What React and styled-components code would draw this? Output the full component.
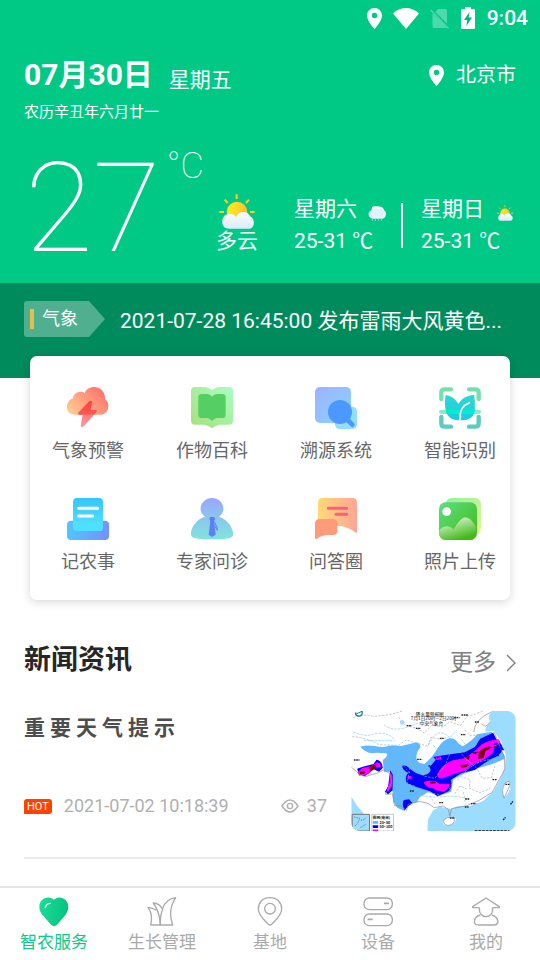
import React from 'react';
import styled, { createGlobalStyle } from 'styled-components';

const GlobalStyle = createGlobalStyle`
  * {
    box-sizing: border-box;
  }

  body {
    margin: 0;
    background: #ffffff;
    font-family: Roboto, "Noto Sans CJK SC", sans-serif;
    -webkit-font-smoothing: antialiased;
  }

  h1, h2, h3, p {
    margin: 0;
  }

  button {
    padding: 0;
    border: 0;
    background: none;
    color: inherit;
    font-family: inherit;
    cursor: pointer;
  }

  a {
    color: inherit;
    text-decoration: none;
  }

  svg {
    display: block;
    flex: none;
  }
`;

const Page = styled.div`
  display: flex;
  flex-direction: column;
  min-height: 100vh;
`;

const Hero = styled.header`
  padding-bottom: 11px;
  background: #00c986;
  color: #ffffff;
`;

const StatusBar = styled.div`
  display: flex;
  align-items: center;
  justify-content: flex-end;
  height: 36px;
  padding: 0 12px;
`;

const StatusIcons = styled.div`
  display: flex;
  align-items: center;
  gap: 11px;
  margin-right: 12px;
`;

const Clock = styled.span`
  font-size: 21px;
  line-height: 24px;
  font-weight: 500;
`;

const DateRow = styled.div`
  display: flex;
  align-items: center;
  padding: 17px 24px 0;
`;

const Today = styled.h1`
  font-size: 30px;
  line-height: 44px;
  font-weight: 700;
`;

const Weekday = styled.span`
  margin-left: 16px;
  padding-top: 10px;
  font-size: 21px;
  line-height: 34px;
`;

const City = styled.button`
  display: flex;
  align-items: center;
  gap: 12px;
  margin-left: auto;
  font-size: 20px;
  line-height: 30px;
`;

const Lunar = styled.p`
  padding: 5px 24px 0;
  font-size: 15px;
  line-height: 20px;
`;

const WeatherRow = styled.div`
  display: flex;
  align-items: flex-end;
  justify-content: space-between;
  padding: 24px 25px 0;
`;

const Temperature = styled.div`
  display: flex;
  font-weight: 100;
`;

const Degrees = styled.span`
  font-size: 124px;
  line-height: 126px;
`;

const Unit = styled.span`
  margin-left: 6px;
  font-size: 36px;
  line-height: 40px;
`;

const Forecast = styled.div`
  display: flex;
  align-items: flex-end;
  padding-bottom: 15px;
  font-size: 21px;
  line-height: 32px;
`;

const Now = styled.div`
  display: flex;
  flex-direction: column;
  align-items: center;
  margin-right: 36px;

  svg {
    margin-bottom: -4px;
  }
`;

const Day = styled.div`
  display: flex;
  flex-direction: column;
`;

const DayName = styled.div`
  display: flex;
  align-items: center;
  gap: 11px;

  svg {
    margin-top: 8px;
  }
`;

const Divider = styled.div`
  width: 2px;
  height: 45px;
  margin: 0 18px 9px 15px;
  background: #ffffff;
`;

const Notice = styled.section`
  display: flex;
  align-items: flex-start;
  gap: 15px;
  padding: 18px 24px 37px;
  background: #008b5c;
  color: #ffffff;
`;

const Tag = styled.span`
  display: flex;
  align-items: center;
  gap: 8px;
  flex: none;
  width: 81px;
  height: 36px;
  padding-left: 6px;
  border-radius: 3px 0 0 3px;
  background: #4faf8e;
  clip-path: polygon(0 0, 65px 0, 100% 50%, 65px 100%, 0 100%);
  font-size: 18px;
  line-height: 34px;

  &::before {
    content: "";
    width: 4px;
    height: 20px;
    background: #e6bd4f;
  }
`;

const NoticeText = styled.p`
  min-width: 0;
  overflow: hidden;
  font-size: 21px;
  line-height: 40px;
  text-overflow: ellipsis;
  white-space: nowrap;
`;

const Card = styled.section`
  display: grid;
  grid-template-columns: repeat(4, 72px);
  justify-content: space-between;
  row-gap: 34px;
  margin: -22px 30px 0;
  padding: 31px 14px 25px 22px;
  border-radius: 7px;
  background: #ffffff;
  box-shadow: 0 2px 10px rgba(0, 0, 0, 0.16);
`;

const Service = styled.button`
  display: flex;
  flex-direction: column;
  align-items: center;
  gap: 9px;
  color: #666666;
  font-size: 18px;
  line-height: 26px;
  white-space: nowrap;
`;

const News = styled.main`
  padding: 42px 24px 24px;
`;

const NewsHeader = styled.div`
  display: flex;
  align-items: center;
  justify-content: space-between;
  margin-bottom: 33px;
`;

const NewsHeading = styled.h2`
  color: #262626;
  font-size: 27px;
  line-height: 36px;
  font-weight: 700;
`;

const More = styled.a`
  display: flex;
  align-items: center;
  gap: 10px;
  padding-top: 6px;
  color: #808080;
  font-size: 23px;
  line-height: 30px;
`;

const Article = styled.article`
  display: flex;
  gap: 24px;
  padding-bottom: 26px;
  border-bottom: 2px solid #ebebeb;
`;

const ArticleBody = styled.div`
  display: flex;
  flex: 1;
  flex-direction: column;
  justify-content: space-between;
  padding: 2px 0 13px;
`;

const ArticleTitle = styled.h3`
  color: #4d4d4d;
  font-size: 21px;
  line-height: 30px;
  font-weight: 700;
  letter-spacing: 5px;
`;

const Meta = styled.div`
  display: flex;
  align-items: center;
  color: #b0b0b0;
  font-size: 18px;
  line-height: 24px;
`;

const Hot = styled.span`
  margin-right: 12px;
  padding: 0 3px;
  border-radius: 3px 3px 3px 0;
  background: #ff4200;
  color: #ffffff;
  font-size: 11px;
  line-height: 15px;
`;

const Views = styled.span`
  display: flex;
  align-items: center;
  gap: 8px;
  margin-left: auto;
`;

const Thumb = styled.div`
  flex: none;
  overflow: hidden;
  border-radius: 9px;
`;

const TabBar = styled.nav`
  display: flex;
  margin-top: auto;
  border-top: 2px solid #e6e6e6;
  background: #ffffff;
`;

const Tab = styled.a`
  display: flex;
  flex: 1;
  flex-direction: column;
  align-items: center;
  gap: 3px;
  padding: 9px 0 6px;
  color: ${({ $active }) => ($active ? '#10c987' : '#aaaaaa')};
  font-size: 17px;
  line-height: 24px;
`;

const Pin = () => (
  <svg width="15" height="21" viewBox="0 0 15 21">
    <path
      fill="#fff"
      fillRule="evenodd"
      d="M7.5 0C3.3 0 0 3.3 0 7.4C0 13 7.5 21 7.5 21S15 13 15 7.4C15 3.3 11.7 0 7.5 0ZM7.5 4.8A2.7 2.7 0 1 1 7.5 10.2A2.7 2.7 0 0 1 7.5 4.8Z"
    />
  </svg>
);

const Wifi = () => (
  <svg width="26" height="21" viewBox="0 0 26 21">
    <path fill="#fff" d="M0 5.6C7.5-1.8 18.500-1.800 26 5.600L13 21Z" />
  </svg>
);

const NoSim = () => (
  <svg width="20" height="21" viewBox="0 0 20 21">
    <path fill="#4dd9ab" d="M8 1H15.500Q17 1 17 2.500V15.500L5.200 3.900ZM2.500 5.500L17 19Q16.600 20 15.500 20H4Q2.500 20 2.500 18.500Z" />
    <path stroke="#4dd9ab" strokeWidth="1.500" d="M.6 2L18.500 20.500" />
  </svg>
);

const Battery = () => (
  <svg width="14" height="22" viewBox="0 0 14 22">
    <path fill="#fff" d="M0 3Q0 2 1 2H4V0H10V2H13Q14 2 14 3V21Q14 22 13 22H1Q0 22 0 21Z" />
    <path fill="#00b67a" d="M8.500 5L3 13H6.200L5.400 19L11 10.500H7.700Z" />
  </svg>
);

const SunCloud = ({ width, height, id }) => (
  <svg width={width} height={height} viewBox="658 463 108 105">
    <defs>
      <linearGradient id={`${id}-sun`}>
        <stop offset="0" stopColor="#fff01f" />
        <stop offset="1" stopColor="#ffbd2f" />
      </linearGradient>
      <linearGradient id={`${id}-cloud`} x1="0" y1="0" x2="0" y2="1">
        <stop offset="0" stopColor="#fcfcff" />
        <stop offset="1" stopColor="#dceafb" />
      </linearGradient>
    </defs>
    <path
      stroke="#ffcb2d"
      strokeWidth="6"
      fill="none"
      d="M711 464V478M675 480L684 490M748 480L739 490M659 517H673M751 517H765"
    />
    <circle cx="712" cy="517" r="31" fill={`url(#${id}-sun)`} />
    <path
      fill={`url(#${id}-cloud)`}
      d="M688 567C661 567 664 531 679 525C690 519 703 523 709 532C716 513 744 512 751 530C767 535 767 567 747 567Z"
    />
  </svg>
);

const SnowCloud = () => (
  <svg width="18" height="15" viewBox="505 80 54 45">
    <path fill="#fff" d="M517 84Q520 80 530 81L545 82Q551 84 553 92L515 96Z" />
    <path
      fill="#e6effd"
      d="M519 118C504 116 503 97 515 93C519 84 532 86 535 90C543 85 552 88 553 93C562 97 561 115 549 118Z"
    />
    <path stroke="#d9eefa" strokeWidth="3" strokeDasharray="3 6" d="M517 122H551" />
  </svg>
);

const AlertIcon = () => (
  <svg width="42" height="42" viewBox="111 51 126 126">
    <defs>
      <linearGradient id="alert-cloud" x1="0" y1="0.800" x2="1" y2="0.200">
        <stop offset="0" stopColor="#ffca92" />
        <stop offset="1" stopColor="#ff6e6b" />
      </linearGradient>
      <linearGradient id="alert-bolt" x1="0" y1="0" x2="0" y2="1">
        <stop offset="0" stopColor="#ff3d38" />
        <stop offset="0.500" stopColor="#ff5852" />
        <stop offset="0.550" stopColor="#ff7b7e" />
        <stop offset="1" stopColor="#ff9ea1" />
      </linearGradient>
    </defs>
    <path
      fill="url(#alert-cloud)"
      d="M135 134C104 134 103 93 129 85C129 67 154 60 164 70C173 41 227 45 225 88C243 99 236 134 212 134Z"
    />
    <path
      fill="url(#alert-bolt)"
      d="M179 93Q185 90 186 96L182 120H197Q203 121 199 127L161 169Q154 175 152 167L158 135H148Q142 133 146 127Z"
    />
  </svg>
);

const BookIcon = () => (
  <svg width="42" height="42" viewBox="483 51 126 126">
    <defs>
      <linearGradient id="book" x1="0" y1="1" x2="1" y2="0">
        <stop offset="0" stopColor="#a8e07a" />
        <stop offset="1" stopColor="#aafcc4" />
      </linearGradient>
    </defs>
    <path
      fill="url(#book)"
      d="M496 51H526Q536 52 546 60Q556 52 566 51H597Q609 51 609 63V152Q609 164 597 164H573Q561 164 546 175Q531 164 520 164H496Q483 164 483 152V63Q483 51 496 51Z"
    />
    <path
      fill="#55cf63"
      d="M515 72H532Q541 72 546 80Q551 72 561 72H577Q587 72 587 82V134Q587 144 577 144H560Q554 145 546 153Q538 145 532 144H515Q505 144 505 134V82Q505 72 515 72Z"
    />
  </svg>
);

const TraceIcon = () => (
  <svg width="42" height="42" viewBox="105 51 126 126">
    <defs>
      <linearGradient id="trace" x1="0" y1="0" x2="1" y2="1">
        <stop offset="0" stopColor="#9eb2ff" />
        <stop offset="1" stopColor="#8ad4ff" />
      </linearGradient>
    </defs>
    <rect x="165" y="110" width="66" height="67" rx="14" fill="#91dfff" />
    <rect x="105" y="51" width="108" height="108" rx="15" fill="url(#trace)" />
    <circle cx="180" cy="126" r="36" fill="#4b98ff" />
    <path stroke="#4b98ff" strokeWidth="14" strokeLinecap="round" d="M203 150L217 164" />
  </svg>
);

const ScanIcon = () => (
  <svg width="42" height="42" viewBox="477 51 126 126">
    <defs>
      <linearGradient id="scan-leaf" x1="0" y1="0" x2="0" y2="1">
        <stop offset="0" stopColor="#30d8cf" />
        <stop offset="1" stopColor="#17cbe4" />
      </linearGradient>
    </defs>
    <path
      fill="none"
      stroke="#74e0ae"
      strokeWidth="13"
      strokeLinecap="round"
      d="M484 87V68Q484 58 494 58H513M567 58H586Q596 58 596 68V87"
    />
    <path
      fill="none"
      stroke="#5dcbbd"
      strokeWidth="13"
      strokeLinecap="round"
      d="M484 141V160Q484 170 494 170H513M567 170H586Q596 170 596 160V141"
    />
    <rect x="477" y="119" width="126" height="13" rx="6" fill="#88e9d4" />
    <path
      fill="url(#scan-leaf)"
      d="M497 75Q522 79 535 101Q549 77 582 74Q587 105 583 126Q578 152 542 151Q505 153 498 124Q492 100 497 75Z"
    />
    <path fill="#00edce" d="M497 119H585Q584 127 581 132H501Q498 127 497 119Z" />
    <path fill="none" stroke="#fff" strokeWidth="5" strokeLinecap="round" d="M568 98Q537 111 541 143L535 161" />
  </svg>
);

const RecordIcon = () => (
  <svg width="42" height="42" viewBox="111 39 126 126">
    <defs>
      <linearGradient id="record-tray">
        <stop offset="0" stopColor="#53c5fd" />
        <stop offset="1" stopColor="#7590ff" />
      </linearGradient>
      <linearGradient id="record-paper" x1="0" y1="0" x2="0" y2="1">
        <stop offset="0" stopColor="#35c5ff" />
        <stop offset="1" stopColor="#57e4ff" />
      </linearGradient>
    </defs>
    <path
      fill="url(#record-tray)"
      d="M124 107H138Q153 120 174 120Q197 120 208 107H225Q237 107 237 119V152Q237 165 225 165H124Q111 165 111 152V119Q111 107 124 107Z"
    />
    <rect x="129" y="39" width="90" height="99" rx="12" fill="url(#record-paper)" />
    <path fill="#4fdfff" d="M129 106Q152 112 174 120Q197 112 219 106V126Q219 138 207 138H141Q129 138 129 126Z" />
    <path stroke="#fff" strokeWidth="9" strokeLinecap="round" d="M146 70H203M146 93H188" />
  </svg>
);

const ExpertIcon = () => (
  <svg width="42" height="42" viewBox="483 39 126 126">
    <defs>
      <linearGradient id="expert" gradientUnits="userSpaceOnUse" x1="0" y1="39" x2="0" y2="163">
        <stop offset="0" stopColor="#98a6ff" />
        <stop offset="1" stopColor="#80e5dc" />
      </linearGradient>
    </defs>
    <path
      fill="url(#expert)"
      d="M525 95C499 78 514 39 546 39C579 39 592 78 567 95C597 104 614 138 608 153C604 161 580 163 546 163C513 163 487 161 484 153C478 136 496 103 525 95Z"
    />
    <path fill="#5a7ffc" d="M540 96H553L555 103L552 108L557 149L546 156L536 149L541 108L538 103Z" />
    <path fill="none" stroke="#5a7ffc" strokeWidth="3" d="M553 110L562 130V136L553 121" />
  </svg>
);

const AnswerIcon = () => (
  <svg width="42" height="42" viewBox="105 39 126 126">
    <defs>
      <linearGradient id="answer">
        <stop offset="0" stopColor="#ffd977" />
        <stop offset="1" stopColor="#ffa595" />
      </linearGradient>
    </defs>
    <path
      fill="url(#answer)"
      d="M128 39H217Q231 39 231 53V140Q231 146 225 142Q203 125 181 123H114V53Q114 39 128 39Z"
    />
    <path stroke="#f9607b" strokeWidth="9" strokeLinecap="round" d="M145 70H200M168 88H200" />
    <path
      fill="#ff9a7a"
      d="M119 102H158Q172 102 172 116V137Q172 150 158 150H142Q127 150 111 161Q105 164 105 158V116Q105 102 119 102Z"
    />
  </svg>
);

const PhotoIcon = () => (
  <svg width="42" height="42" viewBox="477 39 126 126">
    <defs>
      <linearGradient id="photo-back" x1="0" y1="0" x2="1" y2="1">
        <stop offset="0" stopColor="#8ef4a5" />
        <stop offset="1" stopColor="#e8f28c" />
      </linearGradient>
      <linearGradient id="photo" x1="0" y1="0" x2="1" y2="1">
        <stop offset="0" stopColor="#5dde84" />
        <stop offset="1" stopColor="#3fba13" />
      </linearGradient>
      <linearGradient id="photo-hill" x1="0" y1="0" x2="0.500" y2="1">
        <stop offset="0" stopColor="#f7fff5" />
        <stop offset="1" stopColor="#42ba19" />
      </linearGradient>
    </defs>
    <rect x="497" y="39" width="106" height="108" rx="18" fill="url(#photo-back)" />
    <rect x="477" y="52" width="114" height="113" rx="20" fill="url(#photo)" />
    <circle cx="500" cy="80" r="13" fill="#fff" />
    <path
      fill="url(#photo-hill)"
      d="M478 136Q487 124 503 124Q514 125 521 133Q542 97 556 97Q573 98 588 126V145Q588 165 569 165H497Q478 165 478 145Z"
    />
  </svg>
);

const Eye = () => (
  <svg width="18" height="14" viewBox="0 0 18 14" fill="none" stroke="#b0b0b0" strokeWidth="1.400">
    <path d="M1 7Q9-5 17 7Q9 19 1 7Z" />
    <circle cx="9" cy="7" r="2.600" />
  </svg>
);

const Chevron = () => (
  <svg width="10" height="18" viewBox="0 0 10 18" fill="none" stroke="#808080" strokeWidth="1.400">
    <path d="M1 1L9 9L1 17" />
  </svg>
);

const RainMap = () => (
  <svg width="165" height="120" viewBox="35 243 492 360" role="img" aria-label="降水预报图">
    <rect x="35" y="243" width="492" height="360" fill="#fff" />
    <path
      fill="#9cdcff"
      d="M527 243H455Q440 262 453 276Q436 289 436 305L462 303L485 337L498 376L495 417L481 447L462 483L430 513L390 528L352 529L335 537L300 530L280 541L264 569L263 603H527ZM35 500L50 525L70 548L76 567L91 603H35Z"
    />
    <path fill="#fff" d="M488 474Q494 454 509 456Q515 466 507 486L495 503Q485 493 488 474ZM310 575Q318 559 337 560Q351 562 347 574Q335 588 318 586Q309 583 310 575Z" />
    <path
      fill="#62b8fd"
      d="M61 350Q80 344 105 348Q132 354 145 347Q165 345 184 348L218 340Q240 332 242 352Q228 366 230 387Q237 404 255 401L276 380L297 350Q309 331 328 325Q347 324 355 340L368 349Q396 334 412 313L455 305L495 379L492 388L458 402L417 414L371 432L340 447L334 485L299 497L265 486L240 500L232 516L205 523L194 543L172 533L160 514L158 482L145 485L157 461L152 426L132 425L129 390Q147 378 139 370Q107 366 94 370Q75 365 61 350Z"
    />
    <path
      fill="#00f"
      d="M187 407Q199 405 207 413Q225 431 249 436Q281 429 269 412L288 389L280 381Q300 376 321 374L375 367L405 351L421 326L460 308L469 326Q486 340 490 356Q479 380 455 386L431 401L405 420L365 429L333 450Q340 471 327 484L293 499L271 484L221 468L201 459Q193 440 205 428Q188 421 187 407ZM52 416L69 410L101 402L110 389Q128 393 129 413L118 425L99 417L75 439L57 433ZM151 421L159 434L158 481L145 493L135 486L145 468ZM192 510L208 508L218 520L205 529L194 541Q185 523 192 510Z"
    />
    <path
      fill="#f0f"
      d="M293 432Q304 404 339 391L377 384L407 361L426 343Q449 330 477 328L482 338L465 350L458 370L432 389L396 405L377 422L345 431L309 445Q290 447 293 432ZM251 456Q265 450 287 453L298 461L328 462Q329 479 309 485Q288 483 280 475Q257 473 251 456ZM54 426L67 414L98 407L111 397Q124 398 123 411L107 413L85 433L58 437ZM285 381L302 379L305 388L290 390ZM202 440L213 437L216 446L204 446ZM151 427L158 437L156 470L144 485L140 480L149 458Z"
    />
    <path fill="#7d0014" d="M417 365L430 355L451 348L450 358L437 363L432 384L415 387ZM380 377L390 378L387 390L379 386ZM397 369L411 366L409 373ZM60 425L76 423L73 431L60 434ZM87 412L110 403L107 415L92 424ZM270 455L287 454L288 460L273 462ZM361 407L383 403L381 411L366 413Z" />
    <g fill="none" stroke="#aaa" strokeWidth="2" strokeDasharray="7 4">
      <path d="M40 263Q68 250 102 259L149 254L188 243M37 320Q78 322 118 344L176 346L199 330L230 339L264 349L273 322L303 328L325 321M177 262L195 286L229 294L253 309L277 285L308 291L331 275L362 287L383 258L407 252L430 243" />
      <path d="M129 391L169 395L193 409L212 432M242 399L250 438L285 445L316 406L330 371M280 347L317 372L356 362L383 391L410 414M233 507L262 486L303 495L326 485L341 449L360 439L391 449L388 474L421 488L452 475M413 419L427 445L455 443L465 409M345 491L361 468L380 477M365 328L382 351L412 342M375 299L389 316L420 315M285 521L270 497M371 487L377 523M203 359L212 401L202 461L229 470" />
    </g>
    <path fill="none" stroke="#77cdef" strokeWidth="2" strokeDasharray="8 3" d="M41 306Q76 322 102 312Q145 302 166 332M133 285Q165 310 221 284L250 276M266 345Q292 286 330 323L350 301M235 494Q267 504 309 500T391 508M353 451Q401 388 458 389M72 332H161" />
    <path fill="none" stroke="#888" strokeWidth="2" d="M35 412L56 430L76 440L116 428L132 419L150 431L156 458L137 493L158 492L164 527L184 528L200 541L205 523L240 514L266 521L283 533L310 528L326 539L330 558L335 536L381 527L418 511L457 487L478 449L495 417L494 383L462 305M453 276L437 289L425 282M402 306Q404 269 452 247M496 459Q513 447 510 466L493 504Q482 480 496 459M311 573Q318 559 342 562Q350 576 330 586Q313 588 311 573" />
    <g fill="none" stroke="#222" strokeWidth="4" strokeDasharray="5 2">
      <path d="M42 390H59M201 287H216M228 295H243M300 325H313M232 388H247M405 276H419M365 255H386M343 263H359M363 314H378M266 408H282M210 483H223M298 518H311M376 507H390M393 521H409M375 531H386M458 449H471M497 463H511M330 564H345M397 367H413M445 353H458M465 377H477M362 406H387" />
      <path stroke="#900" d="M461 350H470M284 383H300" />
      <path d="M490 570L497 562M512 523L519 514" />
    </g>
    <path stroke="#0018e8" strokeWidth="5" d="M463 343L473 340M479 354L492 359M463 377L475 367" />
    <circle cx="187" cy="277" r="7" fill="#9cdcff" />
    <circle cx="57" cy="248" r="10" fill="none" stroke="#148294" strokeWidth="4" />
    <path stroke="#148294" strokeWidth="3" d="M49 252L68 243" />
    <g fill="#111" fontFamily="Noto Sans CJK SC, sans-serif" fontSize="14">
      <text x="228" y="257">降水量预报图</text>
      <text x="213" y="271">7月1日20时—2日20时</text>
      <text x="240" y="285">中央气象台</text>
    </g>
    <path fill="#9cdcff" stroke="#777" strokeWidth="3" d="M37 553H89V603H37Z" />
    <path fill="none" stroke="#555" strokeWidth="2" strokeDasharray="4 3" d="M43 561L60 565L53 580L43 590M63 571L73 569L80 561M62 593L79 582" />
    <path fill="#fff" stroke="#aaa" strokeWidth="2" d="M96 553H161V603H96Z" />
    <g fill="#111" fontFamily="Noto Sans CJK SC, sans-serif" fontSize="11" fontWeight="700">
      <text x="99" y="568">图例(毫米)</text>
      <text x="119" y="581">25~50</text>
      <text x="119" y="594">50~100</text>
    </g>
    <path stroke="#62b8fd" strokeWidth="8" d="M99 577H115" />
    <path stroke="#00f" strokeWidth="8" d="M99 590H115" />
    <path stroke="#f0f" strokeWidth="5" d="M99 601H115" />
    <path stroke="#222" strokeWidth="3" strokeDasharray="8 3" d="M405 602H518" />
  </svg>
);

const HeartIcon = () => (
  <svg width="30" height="30" viewBox="116 380 90 90">
    <defs>
      <linearGradient id="heart" x1="0" y1="0" x2="1" y2="0.200">
        <stop offset="0" stopColor="#20dc9a" />
        <stop offset="1" stopColor="#05c483" />
      </linearGradient>
    </defs>
    <path
      fill="url(#heart)"
      d="M161 388C142 373 117 386 117 410Q117 424 127 435L153 464Q161 471 169 464L195 435Q204 424 204 410C204 386 178 373 161 388Z"
    />
    <path fill="none" stroke="#fff" strokeWidth="4" strokeLinecap="round" d="M135 412Q137 400 150 399" />
  </svg>
);

const GrassIcon = () => (
  <svg width="30" height="30" viewBox="440 380 90 90" fill="none" stroke="#aaa" strokeWidth="4" strokeLinejoin="round">
    <path d="M451 464H517Q501 420 526 382Q497 385 486 416Q478 399 459 398Q479 427 480 464" />
    <path d="M451 464Q459 431 443 412Q456 411 467 420M488 416Q479 432 480 464" />
  </svg>
);

const BaseIcon = () => (
  <svg width="30" height="30" viewBox="765 380 90 90" fill="none" stroke="#aaa" strokeWidth="4">
    <path d="M810 382C788 382 775 397 775 416C775 435 795 451 805 462Q810 467 815 462C825 451 845 435 845 416C845 397 832 382 810 382Z" />
    <circle cx="810" cy="415" r="16" />
  </svg>
);

const DeviceIcon = () => (
  <svg width="30" height="30" viewBox="277 80 90 90" fill="none" stroke="#aaa" strokeWidth="4">
    <rect x="280" y="83" width="85" height="35" rx="16" />
    <rect x="280" y="131" width="85" height="35" rx="16" />
    <path strokeWidth="5" d="M340 99H355M291 147H306" />
  </svg>
);

const MineIcon = () => (
  <svg width="30" height="30" viewBox="603 80 90 90" fill="none" stroke="#aaa" strokeWidth="4" strokeLinejoin="round">
    <path d="M628 112H611Q607 112 608 109L648 83L688 109Q689 112 685 112H668" />
    <path d="M628 112Q627 126 634 133Q648 145 662 133Q669 126 668 112" />
    <path d="M631 134Q613 139 613 155Q614 164 626 164H671Q682 164 684 155Q683 139 665 134" />
  </svg>
);

const services = [
  { name: '气象预警', Icon: AlertIcon },
  { name: '作物百科', Icon: BookIcon },
  { name: '溯源系统', Icon: TraceIcon },
  { name: '智能识别', Icon: ScanIcon },
  { name: '记农事', Icon: RecordIcon },
  { name: '专家问诊', Icon: ExpertIcon },
  { name: '问答圈', Icon: AnswerIcon },
  { name: '照片上传', Icon: PhotoIcon },
];

const tabs = [
  { name: '智农服务', Icon: HeartIcon, active: true },
  { name: '生长管理', Icon: GrassIcon },
  { name: '基地', Icon: BaseIcon },
  { name: '设备', Icon: DeviceIcon },
  { name: '我的', Icon: MineIcon },
];

const App = () => (
  <Page>
    <GlobalStyle />
    <Hero>
      <StatusBar>
        <StatusIcons>
          <Pin />
          <Wifi />
          <NoSim />
          <Battery />
        </StatusIcons>
        <Clock>9:04</Clock>
      </StatusBar>
      <DateRow>
        <Today>07月30日</Today>
        <Weekday>星期五</Weekday>
        <City type="button">
          <Pin />
          北京市
        </City>
      </DateRow>
      <Lunar>农历辛丑年六月廿一</Lunar>
      <WeatherRow>
        <Temperature>
          <Degrees>27</Degrees>
          <Unit>°C</Unit>
        </Temperature>
        <Forecast>
          <Now>
            <SunCloud id="now" width={36} height={35} />
            <span>多云</span>
          </Now>
          <Day>
            <DayName>
              星期六
              <SnowCloud />
            </DayName>
            <span>25-31 ℃</span>
          </Day>
          <Divider />
          <Day>
            <DayName>
              星期日
              <SunCloud id="sunday" width={20} height={16} />
            </DayName>
            <span>25-31 ℃</span>
          </Day>
        </Forecast>
      </WeatherRow>
    </Hero>
    <Notice>
      <Tag>气象</Tag>
      <NoticeText>2021-07-28 16:45:00 发布雷雨大风黄色...</NoticeText>
    </Notice>
    <Card>
      {services.map(({ name, Icon }) => (
        <Service type="button" key={name}>
          <Icon />
          {name}
        </Service>
      ))}
    </Card>
    <News>
      <NewsHeader>
        <NewsHeading>新闻资讯</NewsHeading>
        <More href="#news">
          更多
          <Chevron />
        </More>
      </NewsHeader>
      <Article>
        <ArticleBody>
          <ArticleTitle>
            <a href="#article">重要天气提示</a>
          </ArticleTitle>
          <Meta>
            <Hot>HOT</Hot>
            <time>2021-07-02 10:18:39</time>
            <Views>
              <Eye />
              37
            </Views>
          </Meta>
        </ArticleBody>
        <Thumb>
          <RainMap />
        </Thumb>
      </Article>
    </News>
    <TabBar>
      {tabs.map(({ name, Icon, active }) => (
        <Tab href="#" key={name} $active={active}>
          <Icon />
          {name}
        </Tab>
      ))}
    </TabBar>
  </Page>
);

export default App;
